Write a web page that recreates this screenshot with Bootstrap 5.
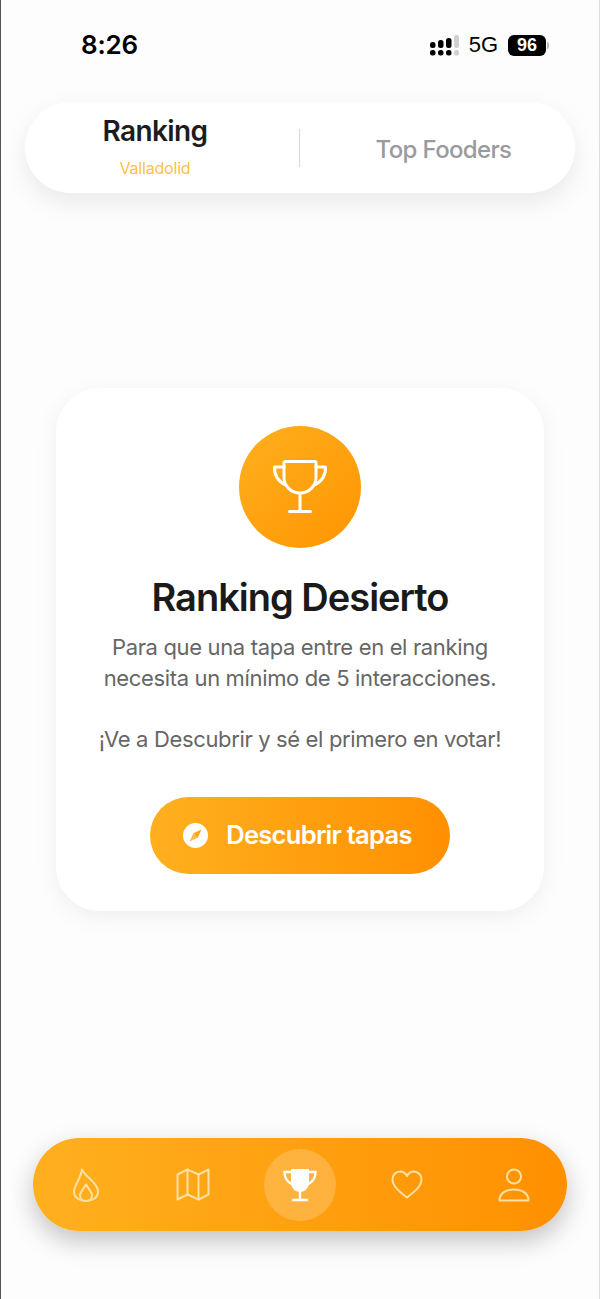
<!DOCTYPE html>
<html lang="es">
<head>
<meta charset="utf-8">
<title>Ranking</title>
<link href="https://cdn.jsdelivr.net/npm/bootstrap@5.3.0/dist/css/bootstrap.min.css" rel="stylesheet">
<style>
html,body{height:1299px;overflow:hidden}
body{background:#fdfdfd;font-family:Inter,"Noto Sans",sans-serif;color:#1a1a1a}
.frame{width:600px;height:1299px;border-left:1.5px solid #555;border-right:1px solid #ddd;display:flex;flex-direction:column}
.statusbar{height:102px;padding:30px 50px 0 80px;display:flex;justify-content:space-between;align-items:flex-start}
.clock{font:600 26px/30px Inter,sans-serif;color:#000;letter-spacing:-.2px}
.status-right{display:flex;align-items:center;height:30px}
.net{font:400 22px/30px "Liberation Sans",sans-serif;color:#000;margin:0 10px 0 9px}
.batt{width:38px;height:21px;background:#000;color:#fff;border-radius:6px;font:700 18px/21px "Liberation Sans",sans-serif;text-align:center}
.batt-tip{width:2px;height:7px;background:#bbb;border-radius:0 2px 2px 0;margin-left:1px}
.headpill{margin:0 24px 0 24px;height:91px;background:#fff;border-radius:46px;box-shadow:0 10px 26px rgba(0,0,0,.08);display:flex;align-items:center}
.tabcol{text-align:center}
.tabcol.one{flex:none;width:274px;height:91px;padding:12px 14px 0 0}
.tabcol.two{flex:1 1 0;padding:4px 0 0 12px}
.tab-main{font-size:28px;line-height:34px;font-weight:600;letter-spacing:-.6px;color:#1c1c1e}
.tab-sub{font-size:16px;line-height:20px;margin-top:10px;color:#ffc04d;letter-spacing:-.2px}
.tab-other{font-size:24px;font-weight:500;letter-spacing:-.65px;color:#9a9a9e;line-height:30px}
.sep{width:1px;height:38px;background:#d5d8e2;flex:none}
.emptycard{margin:195px 55px 0 55px;height:523px;background:#fff;border-radius:44px;box-shadow:0 6px 24px rgba(0,0,0,.06);padding-top:38px;text-align:center}
.medal{width:122px;height:122px;border-radius:50%;background:linear-gradient(135deg,#ffb01f,#ff9500);display:flex;align-items:center;justify-content:center;margin:0 auto}
.emptytitle{font-size:38px;line-height:44px;font-weight:600;letter-spacing:-1px;margin:27px 0 0;color:#1a1a1a}
.emptytext{font-size:22px;line-height:30.5px;color:#666;letter-spacing:-.35px;margin:13px 0 0}
.cta{margin-top:43px;width:300px;height:77px;border:0;border-radius:39px;background:linear-gradient(90deg,#ffb01f,#ff9000);color:#fff;font-size:25.5px;font-weight:600;letter-spacing:-.7px;gap:18px;padding:0 5px 0 0}
.cta:hover,.cta:active{background:linear-gradient(90deg,#ffb01f,#ff9000)!important;color:#fff!important}
.navpill{margin:227px 32px 0 32px;height:93px;border-radius:47px;background:linear-gradient(90deg,#ffb01f,#ff9000);box-shadow:0 10px 26px rgba(0,0,0,.24);display:flex;align-items:center;justify-content:space-between;padding:0}
.navslot{width:107px;display:flex;justify-content:center;align-items:center}
.navactive{width:72px;height:72px;border-radius:50%;background:rgba(255,255,255,.2);display:flex;align-items:center;justify-content:center}
</style>
</head>
<body>
<div class="frame">
  <div class="statusbar">
    <div class="clock">8:26</div>
    <div class="status-right">
      <svg width="31" height="22" viewBox="0 0 31 22"><g fill="#000"><rect x="1" y="8" width="5.500" height="6" rx="2.500"/><rect x="1" y="16" width="5.500" height="5.500" rx="2.500"/><rect x="9" y="6" width="5.500" height="8" rx="2.500"/><rect x="9" y="16" width="5.500" height="5.500" rx="2.500"/><rect x="17" y="4" width="5.500" height="10" rx="2.500"/><rect x="17" y="16" width="5.500" height="5.500" rx="2.500"/></g><rect x="25" y="1" width="5" height="13" rx="2" fill="#d0d0d0"/><rect x="25" y="16" width="5" height="5.500" rx="2" fill="#d0d0d0"/></svg>
      <div class="net">5G</div>
      <div class="batt">96</div>
      <div class="batt-tip"></div>
    </div>
  </div>
  <div class="headpill">
    <div class="tabcol one"><div class="tab-main">Ranking</div><div class="tab-sub">Valladolid</div></div>
    <div class="sep"></div>
    <div class="tabcol two"><div class="tab-other">Top Fooders</div></div>
  </div>
  <div class="emptycard">
    <div class="medal">
      <svg width="56" height="56" viewBox="0 0 56 56" fill="none" stroke="#fff" stroke-width="3" stroke-linecap="round" stroke-linejoin="round"><path d="M13.500 2.500h29c.8 0 1.500.7 1.500 1.500V18c0 9-7 16-16 16S12 27 12 18V4c0-.8.7-1.500 1.500-1.500z"/><path d="M12 8H2.500c-.3 8 3 14 11 18"/><path d="M44 8h9.500c.3 8-3 14-11 18"/><path d="M28 34v18.500"/><path d="M17.500 52.500h21"/></svg>
    </div>
    <h2 class="emptytitle">Ranking Desierto</h2>
    <p class="emptytext">Para que una tapa entre en el ranking<br>necesita un mínimo de 5 interacciones.<br><br>¡Ve a Descubrir y sé el primero en votar!</p>
    <button type="button" class="btn cta d-inline-flex align-items-center justify-content-center">
      <svg width="25" height="25" viewBox="0 0 25 25"><circle cx="12.500" cy="12.500" r="12.500" fill="#fff"/><path d="M18.500 6.500l-3.800 8.200-4.400-4.400z" fill="#ffa512"/><path d="M6.500 18.500l3.800-8.200 4.400 4.400z" fill="#ffa512" opacity=".75"/></svg>
      <span>Descubrir tapas</span>
    </button>
  </div>
  <div class="navpill">
    <div class="navslot">
      <svg width="28" height="34" viewBox="0 0 28 34" fill="none" stroke="#ffe0a0" stroke-width="2" stroke-linejoin="round"><path d="M10 1.500C12.500 7 17.500 9.500 21.500 14.500 24.500 18 26 20.500 26 23.500 26 29.500 20.500 33 14 33S2 29.500 2 23.500C2 17.500 8.500 11.500 10 1.500z"/><path d="M14 16.500C15.500 20 20 23.500 20 27.500 20 30.800 17.300 33 14 33S8 30.800 8 27.500C8 23.500 12.500 20 14 16.500z"/></svg>
    </div>
    <div class="navslot">
      <svg width="34" height="33" viewBox="0 0 34 33" fill="none" stroke="#ffe0a0" stroke-width="2" stroke-linejoin="round"><path d="M1.500 6.500 11.500 1.500 22.500 6.500 32.500 1.500V26.500L22.500 31.500 11.500 26.500 1.500 31.500z"/><path d="M11.500 1.500v25M22.500 6.500v25"/></svg>
    </div>
    <div class="navslot">
      <div class="navactive">
        <svg width="34" height="34" viewBox="0 0 34 34" fill="none"><path d="M8 1h18v13c0 6-4 10-9 10S8 20 8 14z" fill="#fff"/><path d="M8 4H1.500c0 6 2.500 10 8 12.500M26 4h6.500c0 6-2.500 10-8 12.500" stroke="#fff" stroke-width="2.400"/><path d="M17 22v9M10 32h14" stroke="#fff" stroke-width="2.400" stroke-linecap="round"/></svg>
      </div>
    </div>
    <div class="navslot">
      <svg width="32" height="29" viewBox="0 0 32 29" fill="none" stroke="#ffe0a0" stroke-width="2" stroke-linejoin="round"><path d="M16 27.500C9 22 1.500 16.500 1.500 9.500 1.500 5 5 1.500 9 1.500c3 0 5.500 1.500 7 4.500 1.500-3 4-4.500 7-4.500 4 0 7.500 3.500 7.500 8 0 7-7.500 12.500-14.500 18z"/></svg>
    </div>
    <div class="navslot">
      <svg width="32" height="34" viewBox="0 0 32 34" fill="none" stroke="#ffe0a0" stroke-width="2" stroke-linejoin="round"><circle cx="16" cy="8.500" r="7"/><path d="M1.500 32.500c0-7 6-11 14.500-11s14.500 4 14.500 11z"/></svg>
    </div>
  </div>
</div>
<script src="https://cdn.jsdelivr.net/npm/bootstrap@5.3.0/dist/js/bootstrap.bundle.min.js"></script>
</body>
</html>
